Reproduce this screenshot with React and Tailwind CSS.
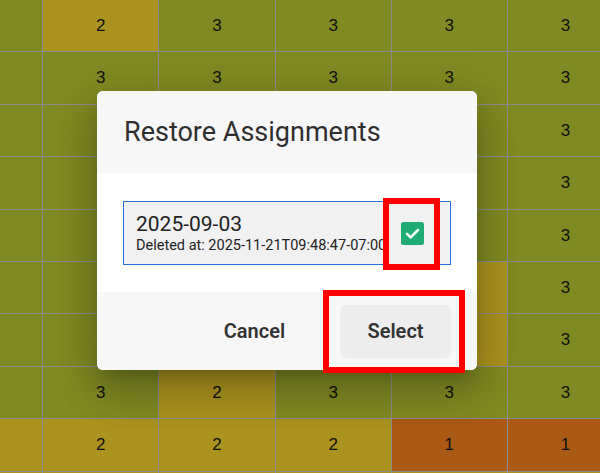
import React from 'react'

// cell colours of the heat grid
const tone = {
  o: 'bg-[#808a22]',
  y: 'bg-[#ab931f]',
  r: 'bg-[#aa5a14]',
}

// values under the dialog are not shown
const rows = [
  ['o', 'y2', 'o3', 'o3', 'o3', 'o3'],
  ['o', 'o3', 'o3', 'o3', 'o3', 'o3'],
  ['o', 'o', 'o', 'o', 'o', 'o3'],
  ['o', 'o', 'o', 'o', 'o', 'o3'],
  ['o', 'o', 'o', 'o', 'o', 'o3'],
  ['o', 'o', 'o', 'o', 'y', 'o3'],
  ['o', 'o', 'o', 'o', 'y', 'o3'],
  ['o', 'o3', 'y2', 'o3', 'o3', 'o3'],
  ['y', 'y2', 'y2', 'y2', 'r1', 'r1'],
  ['y', 'y', 'y', 'y', 'y', 'y'],
]

function Grid() {
  return (
    <div className="grid grid-cols-[repeat(6,115.2px)] auto-rows-[51.4px] gap-px bg-[#8c8c8c] ml-[-73px] w-max">
      {rows.flatMap((row, r) =>
        row.map((cell, c) => (
          <div
            key={`${r}-${c}`}
            className={`${tone[cell[0]]} flex items-center justify-center text-[17px] text-[#111] font-['Liberation_Sans',Arial,sans-serif]`}
          >
            {cell.slice(1)}
          </div>
        ))
      )}
    </div>
  )
}

function CheckIcon() {
  return (
    <svg width="23" height="23" viewBox="0 0 23 23" className="shrink-0">
      <rect x="0" y="0" width="23" height="23" rx="2.5" fill="#1fab74" />
      <path d="M6 11.8l3.6 3.6L17 8" fill="none" stroke="#fff" strokeWidth="2.6" strokeLinecap="round" strokeLinejoin="round" />
    </svg>
  )
}

export default function App() {
  return (
    <div className="relative w-[600px] h-[473px] overflow-hidden bg-[#8c8c8c] font-['Roboto',sans-serif]">
      <Grid />

      {/* Dialog */}
      <div className="absolute left-[97px] top-[91px] w-[380px] rounded-[6px] overflow-hidden bg-white shadow-[0_11px_15px_-7px_rgba(0,0,0,0.2),0_24px_38px_3px_rgba(0,0,0,0.14),0_9px_46px_8px_rgba(0,0,0,0.12)]">
        <div className="h-[82px] bg-[#f7f7f7] flex items-center px-[27px]">
          <h2 className="text-[27px] text-[#2f2f2f] leading-none">Restore Assignments</h2>
        </div>

        <div className="px-[26px] pt-[28px] pb-[27px]">
          <div className="h-[64px] border border-[#2a72d4] bg-[#f1f1f1] flex items-center pl-[12px] pr-[26px]">
            <div className="flex-1 min-w-0 pt-[2px]">
              <div className="text-[21px] leading-[24px] text-[#222]">2025-09-03</div>
              <div className="text-[14.5px] leading-[20px] text-[#222] whitespace-nowrap">
                Deleted at: 2025-11-21T09:48:47-07:00
              </div>
            </div>
            <CheckIcon />
          </div>
        </div>

        <div className="h-[78px] bg-[#f7f7f7] flex items-center justify-end gap-[30px] px-[26px]">
          <button className="w-[111px] h-[53px] rounded-[6px] text-[20px] font-semibold text-[#333]">
            Cancel
          </button>
          <button className="w-[111px] h-[53px] rounded-[6px] bg-[#ededed] text-[20px] font-semibold text-[#333]">
            Select
          </button>
        </div>
      </div>

      {/* Red annotation boxes */}
      <div className="absolute left-[383px] top-[198px] w-[57px] h-[72px] border-[6px] border-[#ff0000]" />
      <div className="absolute left-[323px] top-[290px] w-[142px] h-[83px] border-[6px] border-[#ff0000]" />
    </div>
  )
}
